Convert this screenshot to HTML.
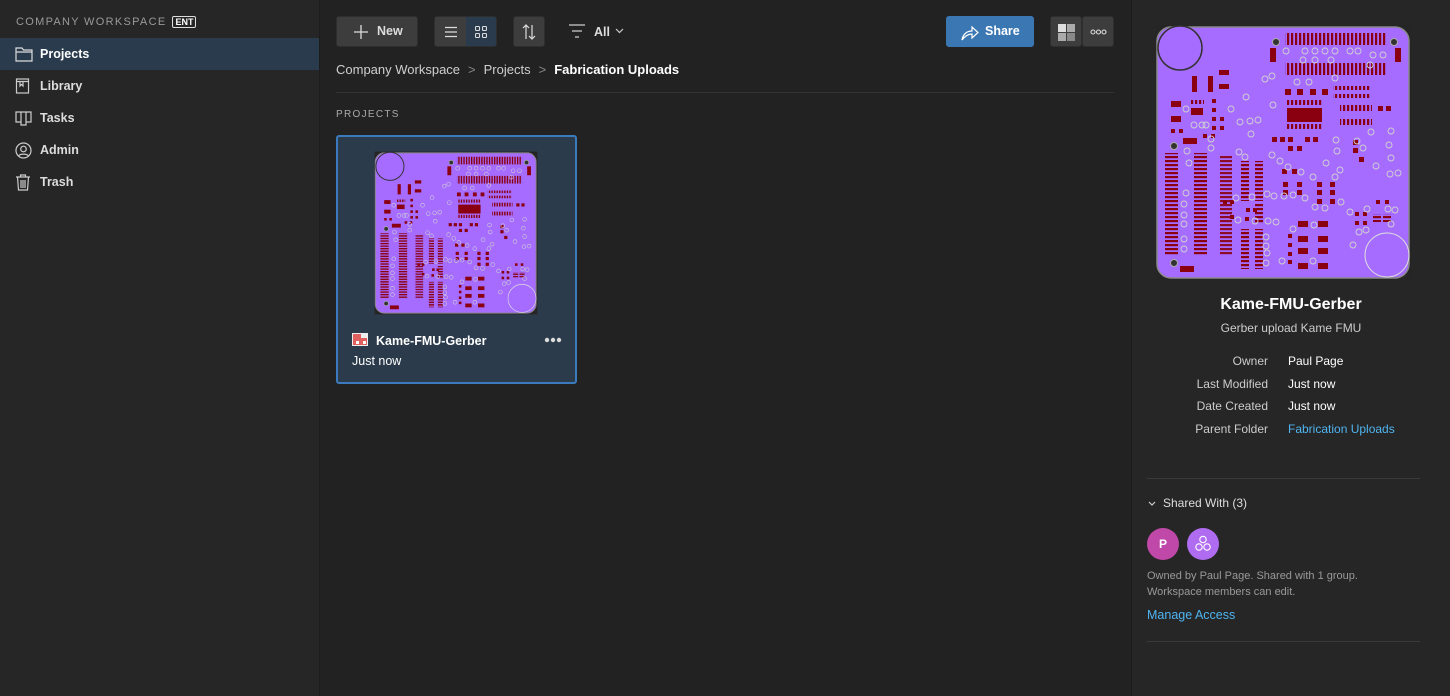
<!DOCTYPE html>
<html><head><meta charset="utf-8">
<style>
*{box-sizing:border-box;margin:0;padding:0}
body{width:1450px;height:696px;overflow:hidden;background:#222222;font-family:"Liberation Sans",sans-serif;color:#e6e6e6;position:relative}
.side{position:absolute;left:0;top:0;width:320px;height:696px;background:#262626;border-right:1px solid #1c1c1c}
.ws{position:absolute;left:16px;top:16px;font-size:11px;letter-spacing:1.3px;color:#9a9a9a}
.ent{display:inline-block;border:1px solid #ddd;color:#fff;font-size:9px;letter-spacing:0;padding:0 2px;margin-left:6px;line-height:10px;border-radius:2px;font-weight:bold}
.nav{position:absolute;left:0;width:319px;height:32px;font-size:12.5px;font-weight:bold;color:#ddd;padding-left:40px;line-height:32px}
.nav.act{background:#293b4c;color:#fff}
.nav svg{position:absolute;left:15px;top:8px}
.btn{position:absolute;top:16px;height:31px;background:#3d3d3d;border-radius:3px;border:1px solid #2e2e2e}
.right{position:absolute;left:1131px;top:0;width:319px;height:696px;background:#262626;border-left:1px solid #1c1c1c}
</style></head><body>
<svg width="0" height="0" style="position:absolute">
<defs>
<pattern id="hs" width="4" height="4" patternUnits="userSpaceOnUse"><rect width="4" height="2.2" fill="#8a0010"/></pattern>
<pattern id="vs" width="4" height="4" patternUnits="userSpaceOnUse"><rect width="2.2" height="4" fill="#8a0010"/></pattern>
<symbol id="pcb" viewBox="0 0 257 257">
<rect x="1" y="1" width="255" height="255" fill="#252525"/>
<rect x="2" y="3" width="252" height="251" rx="14" fill="#a66cff" stroke="#888" stroke-width="1.5"/>
<circle cx="25" cy="24" r="22" fill="#a66cff" stroke="#333" stroke-width="1.5"/>
<circle cx="232" cy="231" r="22" fill="#a66cff" stroke="#ddd" stroke-width="1"/>
<g fill="#8a0010">
<rect x="130" y="9" width="102" height="12" fill="url(#vs)"/>
<rect x="130" y="39" width="102" height="12" fill="url(#vs)"/>
<rect x="115" y="24" width="6" height="14"/><rect x="240" y="24" width="6" height="14"/>
<rect x="10" y="129" width="13" height="102" fill="url(#hs)"/>
<rect x="39" y="129" width="13" height="102" fill="url(#hs)"/>
<rect x="132" y="84" width="35" height="14"/>
<rect x="132" y="76" width="35" height="5" fill="url(#vs)"/>
<rect x="132" y="100" width="35" height="5" fill="url(#vs)"/>
<rect x="37" y="52" width="5" height="16"/><rect x="53" y="52" width="5" height="16"/>
<rect x="64" y="46" width="10" height="5"/><rect x="64" y="60" width="10" height="5"/>
<rect x="16" y="77" width="10" height="6"/><rect x="16" y="92" width="10" height="6"/>
<rect x="36" y="84" width="12" height="7"/>
<rect x="28" y="114" width="14" height="6"/><rect x="25" y="242" width="14" height="6"/>
<rect x="36" y="76" width="13" height="4" fill="url(#vs)"/>
<rect x="57" y="75" width="4" height="4"/><rect x="57" y="84" width="4" height="4"/><rect x="57" y="93" width="4" height="4"/><rect x="57" y="102" width="4" height="4"/>
<rect x="65" y="93" width="4" height="4"/><rect x="65" y="102" width="4" height="4"/>
<rect x="16" y="105" width="4" height="4"/><rect x="24" y="105" width="4" height="4"/>
<rect x="48" y="110" width="4" height="4"/><rect x="56" y="110" width="4" height="4"/>
<rect x="130" y="65" width="6" height="6"/><rect x="142" y="65" width="6" height="6"/><rect x="155" y="65" width="6" height="6"/><rect x="167" y="65" width="6" height="6"/>
<rect x="178" y="62" width="38" height="4" fill="url(#vs)"/><rect x="178" y="70" width="38" height="4" fill="url(#vs)"/>
<rect x="185" y="81" width="32" height="6" fill="url(#vs)"/><rect x="185" y="95" width="32" height="6" fill="url(#vs)"/>
<rect x="223" y="82" width="5" height="5"/><rect x="231" y="82" width="5" height="5"/>
<rect x="65" y="131" width="12" height="100" fill="url(#hs)" opacity=".9"/>
<rect x="86" y="137" width="8" height="40" fill="url(#hs)"/><rect x="100" y="137" width="8" height="40" fill="url(#hs)"/>
<rect x="86" y="205" width="8" height="40" fill="url(#hs)"/><rect x="100" y="205" width="8" height="40" fill="url(#hs)"/>
<rect x="100" y="180" width="8" height="20" fill="url(#hs)"/>
<rect x="117" y="113" width="5" height="5"/><rect x="125" y="113" width="5" height="5"/><rect x="133" y="113" width="5" height="5"/><rect x="150" y="113" width="5" height="5"/><rect x="158" y="113" width="5" height="5"/>
<rect x="133" y="122" width="5" height="5"/><rect x="142" y="122" width="5" height="5"/>
<rect x="127" y="145" width="5" height="5"/><rect x="137" y="145" width="5" height="5"/>
<rect x="128" y="158" width="5" height="5"/><rect x="142" y="158" width="5" height="5"/><rect x="162" y="158" width="5" height="5"/><rect x="175" y="158" width="5" height="5"/>
<rect x="128" y="166" width="5" height="5"/><rect x="142" y="166" width="5" height="5"/><rect x="162" y="166" width="5" height="5"/><rect x="175" y="166" width="5" height="5"/>
<rect x="162" y="175" width="5" height="5"/><rect x="175" y="175" width="5" height="5"/>
<rect x="198" y="116" width="5" height="5"/><rect x="198" y="124" width="5" height="5"/><rect x="204" y="133" width="5" height="5"/>
<rect x="143" y="197" width="10" height="6"/><rect x="163" y="197" width="10" height="6"/>
<rect x="143" y="212" width="10" height="6"/><rect x="163" y="212" width="10" height="6"/>
<rect x="143" y="224" width="10" height="6"/><rect x="163" y="224" width="10" height="6"/>
<rect x="143" y="239" width="10" height="6"/><rect x="163" y="239" width="10" height="6"/>
<rect x="133" y="210" width="4" height="4"/><rect x="133" y="219" width="4" height="4"/><rect x="133" y="228" width="4" height="4"/><rect x="133" y="236" width="4" height="4"/>
<rect x="200" y="188" width="4" height="4"/><rect x="208" y="188" width="4" height="4"/><rect x="200" y="197" width="4" height="4"/><rect x="208" y="197" width="4" height="4"/>
<rect x="221" y="176" width="4" height="4"/><rect x="230" y="176" width="4" height="4"/>
<rect x="218" y="190" width="8" height="8" fill="url(#hs)"/><rect x="228" y="190" width="8" height="8" fill="url(#hs)"/>
<rect x="68" y="176" width="4" height="4"/><rect x="75" y="176" width="4" height="4"/><rect x="91" y="184" width="4" height="4"/><rect x="98" y="184" width="4" height="4"/>
<rect x="75" y="191" width="4" height="4"/><rect x="90" y="193" width="4" height="4"/>
</g>
<g fill="none" stroke="#d0d0d0" stroke-width="0.9">
<circle cx="131" cy="27" r="3"/><circle cx="150" cy="27" r="3"/><circle cx="160" cy="27" r="3"/><circle cx="170" cy="27" r="3"/><circle cx="180" cy="27" r="3"/><circle cx="195" cy="27" r="3"/><circle cx="203" cy="27" r="3"/><circle cx="218" cy="31" r="3"/><circle cx="228" cy="31" r="3"/>
<circle cx="148" cy="36" r="3"/><circle cx="160" cy="36" r="3"/><circle cx="176" cy="36" r="3"/><circle cx="215" cy="41" r="3"/>
<circle cx="110" cy="55" r="3"/><circle cx="117" cy="52" r="3"/><circle cx="142" cy="58" r="3"/><circle cx="154" cy="58" r="3"/><circle cx="180" cy="54" r="3"/>
<circle cx="31" cy="85" r="3"/><circle cx="39" cy="101" r="3"/><circle cx="47" cy="101" r="3"/><circle cx="51" cy="101" r="3"/>
<circle cx="91" cy="73" r="3"/><circle cx="76" cy="85" r="3"/><circle cx="85" cy="98" r="3"/><circle cx="95" cy="97" r="3"/><circle cx="103" cy="96" r="3"/><circle cx="96" cy="110" r="3"/><circle cx="118" cy="81" r="3"/>
<circle cx="56" cy="115" r="3"/><circle cx="56" cy="124" r="3"/><circle cx="32" cy="127" r="3"/><circle cx="34" cy="139" r="3"/>
<circle cx="84" cy="128" r="3"/><circle cx="90" cy="133" r="3"/><circle cx="117" cy="131" r="3"/><circle cx="125" cy="137" r="3"/><circle cx="133" cy="143" r="3"/>
<circle cx="146" cy="148" r="3"/><circle cx="171" cy="139" r="3"/><circle cx="158" cy="153" r="3"/><circle cx="180" cy="153" r="3"/><circle cx="185" cy="146" r="3"/>
<circle cx="181" cy="116" r="3"/><circle cx="182" cy="127" r="3"/><circle cx="202" cy="117" r="3"/><circle cx="216" cy="108" r="3"/><circle cx="236" cy="107" r="3"/><circle cx="234" cy="121" r="3"/><circle cx="236" cy="134" r="3"/>
<circle cx="208" cy="124" r="3"/><circle cx="221" cy="142" r="3"/><circle cx="235" cy="150" r="3"/><circle cx="243" cy="149" r="3"/>
<circle cx="31" cy="169" r="3"/><circle cx="29" cy="180" r="3"/><circle cx="29" cy="191" r="3"/><circle cx="29" cy="200" r="3"/><circle cx="29" cy="215" r="3"/><circle cx="29" cy="225" r="3"/>
<circle cx="81" cy="174" r="3"/><circle cx="97" cy="173" r="3"/><circle cx="112" cy="170" r="3"/><circle cx="119" cy="172" r="3"/><circle cx="129" cy="172" r="3"/><circle cx="138" cy="171" r="3"/><circle cx="150" cy="174" r="3"/>
<circle cx="160" cy="183" r="3"/><circle cx="170" cy="184" r="3"/><circle cx="186" cy="178" r="3"/><circle cx="195" cy="188" r="3"/><circle cx="204" cy="208" r="3"/>
<circle cx="83" cy="196" r="3"/><circle cx="100" cy="197" r="3"/><circle cx="113" cy="197" r="3"/><circle cx="121" cy="198" r="3"/><circle cx="138" cy="205" r="3"/><circle cx="159" cy="201" r="3"/>
<circle cx="111" cy="213" r="3"/><circle cx="111" cy="222" r="3"/><circle cx="112" cy="229" r="3"/><circle cx="111" cy="239" r="3"/><circle cx="127" cy="237" r="3"/><circle cx="158" cy="237" r="3"/><circle cx="198" cy="221" r="3"/>
<circle cx="236" cy="200" r="3"/><circle cx="240" cy="186" r="3"/><circle cx="233" cy="185" r="3"/><circle cx="211" cy="206" r="3"/><circle cx="212" cy="185" r="3"/>
</g>
<g fill="#333" stroke="#aaa" stroke-width="1"><circle cx="121" cy="18" r="3.5"/><circle cx="239" cy="18" r="3.5"/><circle cx="19" cy="122" r="3.5"/><circle cx="19" cy="239" r="3.5"/></g>
</symbol>
</defs></svg>

<div class="side">
  <div class="ws">COMPANY WORKSPACE<span class="ent">ENT</span></div>
  <div class="nav act" style="top:38px"><svg width="18" height="16" viewBox="0 0 18 16" fill="none" stroke="#ddd" stroke-width="1.2"><path d="M1 2h6l1.5 2H17v11H1z M1 6h16"/></svg>Projects</div>
  <div class="nav" style="top:70px"><svg width="16" height="16" viewBox="0 0 16 16" fill="none" stroke="#ccc" stroke-width="1.2"><rect x="1.5" y="1" width="12" height="14"/><path d="M1.5 3.5h12M5 4v4l1.5-1.5L8 8V4"/></svg>Library</div>
  <div class="nav" style="top:102px"><svg width="18" height="16" viewBox="0 0 18 16" fill="none" stroke="#ccc" stroke-width="1.2"><path d="M1 2h5v10H1z M6 2h5v13H6z M11 2h5v10h-5z"/></svg>Tasks</div>
  <div class="nav" style="top:134px"><svg width="17" height="17" viewBox="0 0 17 17" fill="none" stroke="#ccc" stroke-width="1.2"><circle cx="8.5" cy="8.5" r="7.5"/><circle cx="8.5" cy="7" r="2.8"/><path d="M3.5 14c1.5-2.5 8.5-2.5 10 0"/></svg>Admin</div>
  <div class="nav" style="top:166px"><svg width="16" height="17" viewBox="0 0 16 17" fill="none" stroke="#ccc" stroke-width="1.2"><path d="M1 3h14M5.5 3V1h5v2M2.5 3l1 13h9l1-13M6 6v8M8 6v8M10 6v8"/></svg>Trash</div>
</div>

<div class="btn" style="left:336px;width:82px"><svg style="position:absolute;left:16px;top:7px" width="16" height="16" viewBox="0 0 16 16" stroke="#ddd" stroke-width="1.3"><path d="M8 1v14M1 8h14"/></svg><span style="position:absolute;left:40px;top:7px;font-size:12.5px;font-weight:bold;color:#ddd">New</span></div>
<div class="btn" style="left:434px;width:63px;overflow:hidden"><div style="position:absolute;left:31px;top:0;width:32px;height:31px;background:#293b4c"></div>
<svg style="position:absolute;left:10px;top:9px" width="12" height="12" viewBox="0 0 12 12" stroke="#ddd" stroke-width="1.2"><path d="M0 1.5h12M0 6h12M0 10.5h12"/></svg>
<svg style="position:absolute;left:40px;top:9px" width="12" height="12" viewBox="0 0 12 12" fill="none" stroke="#ddd" stroke-width="1.1"><rect x=".5" y=".5" width="4" height="4" rx="1"/><rect x="7.5" y=".5" width="4" height="4" rx="1"/><rect x=".5" y="7.5" width="4" height="4" rx="1"/><rect x="7.5" y="7.5" width="4" height="4" rx="1"/></svg></div>
<div class="btn" style="left:513px;width:32px"><svg style="position:absolute;left:7px;top:7px" width="16" height="16" viewBox="0 0 16 16" fill="none" stroke="#ddd" stroke-width="1.2"><path d="M5 15V1M2 4l3-3 3 3M11 1v14M8 12l3 3 3-3"/></svg></div>
<svg style="position:absolute;left:569px;top:24px" width="16" height="14" viewBox="0 0 16 14" stroke="#ccc" stroke-width="1.2"><path d="M0 1h16M3 7h10M6 13h4"/></svg>
<span style="position:absolute;left:594px;top:25px;font-size:12.5px;font-weight:bold;color:#ddd">All</span>
<svg style="position:absolute;left:615px;top:28px" width="9" height="6" viewBox="0 0 9 6" fill="none" stroke="#ccc" stroke-width="1.2"><path d="M1 1l3.5 3.5L8 1"/></svg>
<div class="btn" style="left:946px;width:88px;background:#3b78b3;border-color:#3b78b3"><svg style="position:absolute;left:14px;top:8px" width="18" height="16" viewBox="0 0 18 16" fill="none" stroke="#fff" stroke-width="1.2"><path d="M1 15c1-6 5-9 10-9V2l6 5.5-6 5.5V9c-4 0-7 2-10 6z"/></svg><span style="position:absolute;left:38px;top:7px;font-size:12.5px;font-weight:bold;color:#fff">Share</span></div>
<div class="btn" style="left:1050px;width:32px"><svg style="position:absolute;left:7px;top:7px" width="17" height="17" viewBox="0 0 17 17"><rect x="0" y="0" width="8" height="8" fill="#ddd"/><rect x="9" y="0" width="8" height="8" fill="#aaa"/><rect x="0" y="9" width="8" height="8" fill="#aaa"/><rect x="9" y="9" width="8" height="8" fill="#888"/></svg></div>
<div class="btn" style="left:1082px;width:32px"><svg style="position:absolute;left:7px;top:12px" width="17" height="6" viewBox="0 0 17 6" fill="none" stroke="#ddd" stroke-width="1.1"><circle cx="3" cy="3" r="2"/><circle cx="8.5" cy="3" r="2"/><circle cx="14" cy="3" r="2"/></svg></div>

<div style="position:absolute;left:336px;top:62px;font-size:13px;color:#cfcfcf">Company Workspace<span style="color:#888;margin:0 8px">&gt;</span>Projects<span style="color:#888;margin:0 8px">&gt;</span><span style="color:#fff;font-weight:bold">Fabrication Uploads</span></div>
<div style="position:absolute;left:336px;top:92px;width:778px;height:1px;background:#333"></div>
<div style="position:absolute;left:336px;top:109px;font-size:10px;letter-spacing:1.3px;color:#aaa">PROJECTS</div>

<div style="position:absolute;left:336px;top:135px;width:241px;height:249px;background:#2b3b4b;border:2px solid #3b7bbd;border-radius:3px">
  <svg style="position:absolute;left:36px;top:14px" width="164" height="164"><use href="#pcb"/></svg>
  <svg style="position:absolute;left:14px;top:196px" width="16" height="13" viewBox="0 0 16 13"><rect width="16" height="13" fill="#eee"/><rect x="1" y="1" width="8" height="11" fill="#e06060"/><rect x="9" y="5" width="6" height="7" fill="#e06060"/><rect x="4" y="8" width="3" height="3" fill="#fff"/><rect x="11" y="8" width="3" height="3" fill="#fff"/></svg>
  <span style="position:absolute;left:38px;top:197px;font-size:12.5px;font-weight:bold;color:#fff">Kame-FMU-Gerber</span>
  <svg style="position:absolute;left:206px;top:200px" width="18" height="6" viewBox="0 0 18 6" fill="#ddd"><circle cx="3" cy="3" r="2.2"/><circle cx="9" cy="3" r="2.2"/><circle cx="15" cy="3" r="2.2"/></svg>
  <span style="position:absolute;left:14px;top:217px;font-size:12.5px;color:#fff">Just now</span>
</div>

<div class="right">
  <svg style="position:absolute;left:23px;top:24px" width="257" height="257"><use href="#pcb"/></svg>
  <div style="position:absolute;left:0;width:318px;top:296px;text-align:center;font-size:16px;font-weight:bold;color:#fff">Kame-FMU-Gerber</div>
  <div style="position:absolute;left:0;width:318px;top:321px;text-align:center;font-size:12px;color:#ccc">Gerber upload Kame FMU</div>
  <div style="position:absolute;right:182px;top:350px;text-align:right;font-size:12px;color:#ccc;line-height:22.7px">Owner<br>Last Modified<br>Date Created<br>Parent Folder</div>
  <div style="position:absolute;left:156px;top:350px;font-size:12px;color:#fff;line-height:22.7px">Paul Page<br>Just now<br>Just now<br><span style="color:#4fb4f0">Fabrication Uploads</span></div>
  <div style="position:absolute;left:15px;top:478px;width:273px;height:1px;background:#3a3a3a"></div>
  <svg style="position:absolute;left:16px;top:501px" width="8" height="6" viewBox="0 0 8 6" fill="none" stroke="#ccc" stroke-width="1.2"><path d="M1 1l3 3 3-3"/></svg>
  <div style="position:absolute;left:31px;top:496px;font-size:12px;color:#ddd">Shared With (3)</div>
  <div style="position:absolute;left:15px;top:528px;width:32px;height:32px;border-radius:50%;background:#c048a8;color:#fff;font-size:12px;font-weight:bold;text-align:center;line-height:32px">P</div>
  <div style="position:absolute;left:55px;top:528px;width:32px;height:32px;border-radius:50%;background:#b06cf0"><svg width="32" height="32" viewBox="0 0 32 32" fill="none" stroke="#fff" stroke-width="1.1"><circle cx="16" cy="11.5" r="3.2"/><circle cx="12" cy="19" r="3.2"/><circle cx="20" cy="19" r="3.2"/></svg></div>
  <div style="position:absolute;left:15px;top:568px;font-size:11px;color:#999;line-height:16px">Owned by Paul Page. Shared with 1 group.<br>Workspace members can edit.</div>
  <div style="position:absolute;left:15px;top:608px;font-size:12.5px;color:#4fb4f0">Manage Access</div>
  <div style="position:absolute;left:15px;top:641px;width:273px;height:1px;background:#3a3a3a"></div>
</div>
</body></html>
